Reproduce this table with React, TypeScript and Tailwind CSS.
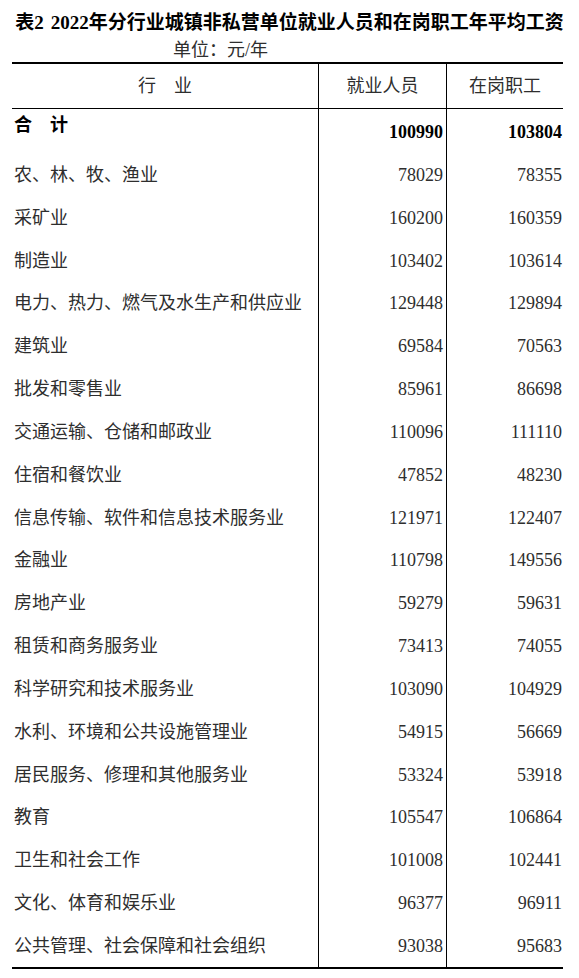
const rows: [string, string, string][] = [
  ['农、林、牧、渔业', '78029', '78355'],
  ['采矿业', '160200', '160359'],
  ['制造业', '103402', '103614'],
  ['电力、热力、燃气及水生产和供应业', '129448', '129894'],
  ['建筑业', '69584', '70563'],
  ['批发和零售业', '85961', '86698'],
  ['交通运输、仓储和邮政业', '110096', '111110'],
  ['住宿和餐饮业', '47852', '48230'],
  ['信息传输、软件和信息技术服务业', '121971', '122407'],
  ['金融业', '110798', '149556'],
  ['房地产业', '59279', '59631'],
  ['租赁和商务服务业', '73413', '74055'],
  ['科学研究和技术服务业', '103090', '104929'],
  ['水利、环境和公共设施管理业', '54915', '56669'],
  ['居民服务、修理和其他服务业', '53324', '53918'],
  ['教育', '105547', '106864'],
  ['卫生和社会工作', '101008', '102441'],
  ['文化、体育和娱乐业', '96377', '96911'],
  ['公共管理、社会保障和社会组织', '93038', '95683'],
]

export default function App() {
  return (
    <div className="w-[579px] h-[978px] bg-white pt-[10px] px-[12px] font-['Liberation_Serif','Noto_Sans_CJK_SC',serif] text-[#2e2e2e]">
      <h1 className="text-center text-[19px] leading-[26px] font-bold text-black whitespace-nowrap">
        表2<span className="ml-[7px]">2022年分行业城镇非私营单位就业人员和在岗职工年平均工资</span>
      </h1>
      <div className="mt-[3px] ml-[161px] text-[18px] leading-[23px]">单位：元/年</div>

      <div className="w-[551px] border-t-2 border-b-2 border-black">
        {/* header */}
        <div className="grid grid-cols-[307px_128px_116px] h-[45px] border-b border-black text-[18px]">
          <div className="border-r border-black flex items-center justify-center">行　业</div>
          <div className="border-r border-black flex items-center justify-center">就业人员</div>
          <div className="flex items-center justify-center">在岗职工</div>
        </div>

        {/* total */}
        <div className="grid grid-cols-[307px_128px_116px] h-[44.6px] text-[18px] leading-[24px] font-bold text-black">
          <div className="border-r border-black pl-[2px] pt-[4px]">合　计</div>
          <div className="border-r border-black text-right pr-[3px] pt-[11px]">100990</div>
          <div className="text-right pr-[1px] pt-[11px]">103804</div>
        </div>

        {rows.map(([name, a, b]) => (
          <div key={name} className="grid grid-cols-[307px_128px_116px] h-[42.83px] text-[18px] leading-[24px]">
            <div className="border-r border-black pl-[2px] flex items-center whitespace-nowrap">{name}</div>
            <div className="border-r border-black pr-[3px] flex items-center justify-end">{a}</div>
            <div className="pr-[1px] flex items-center justify-end">{b}</div>
          </div>
        ))}
      </div>
    </div>
  )
}
